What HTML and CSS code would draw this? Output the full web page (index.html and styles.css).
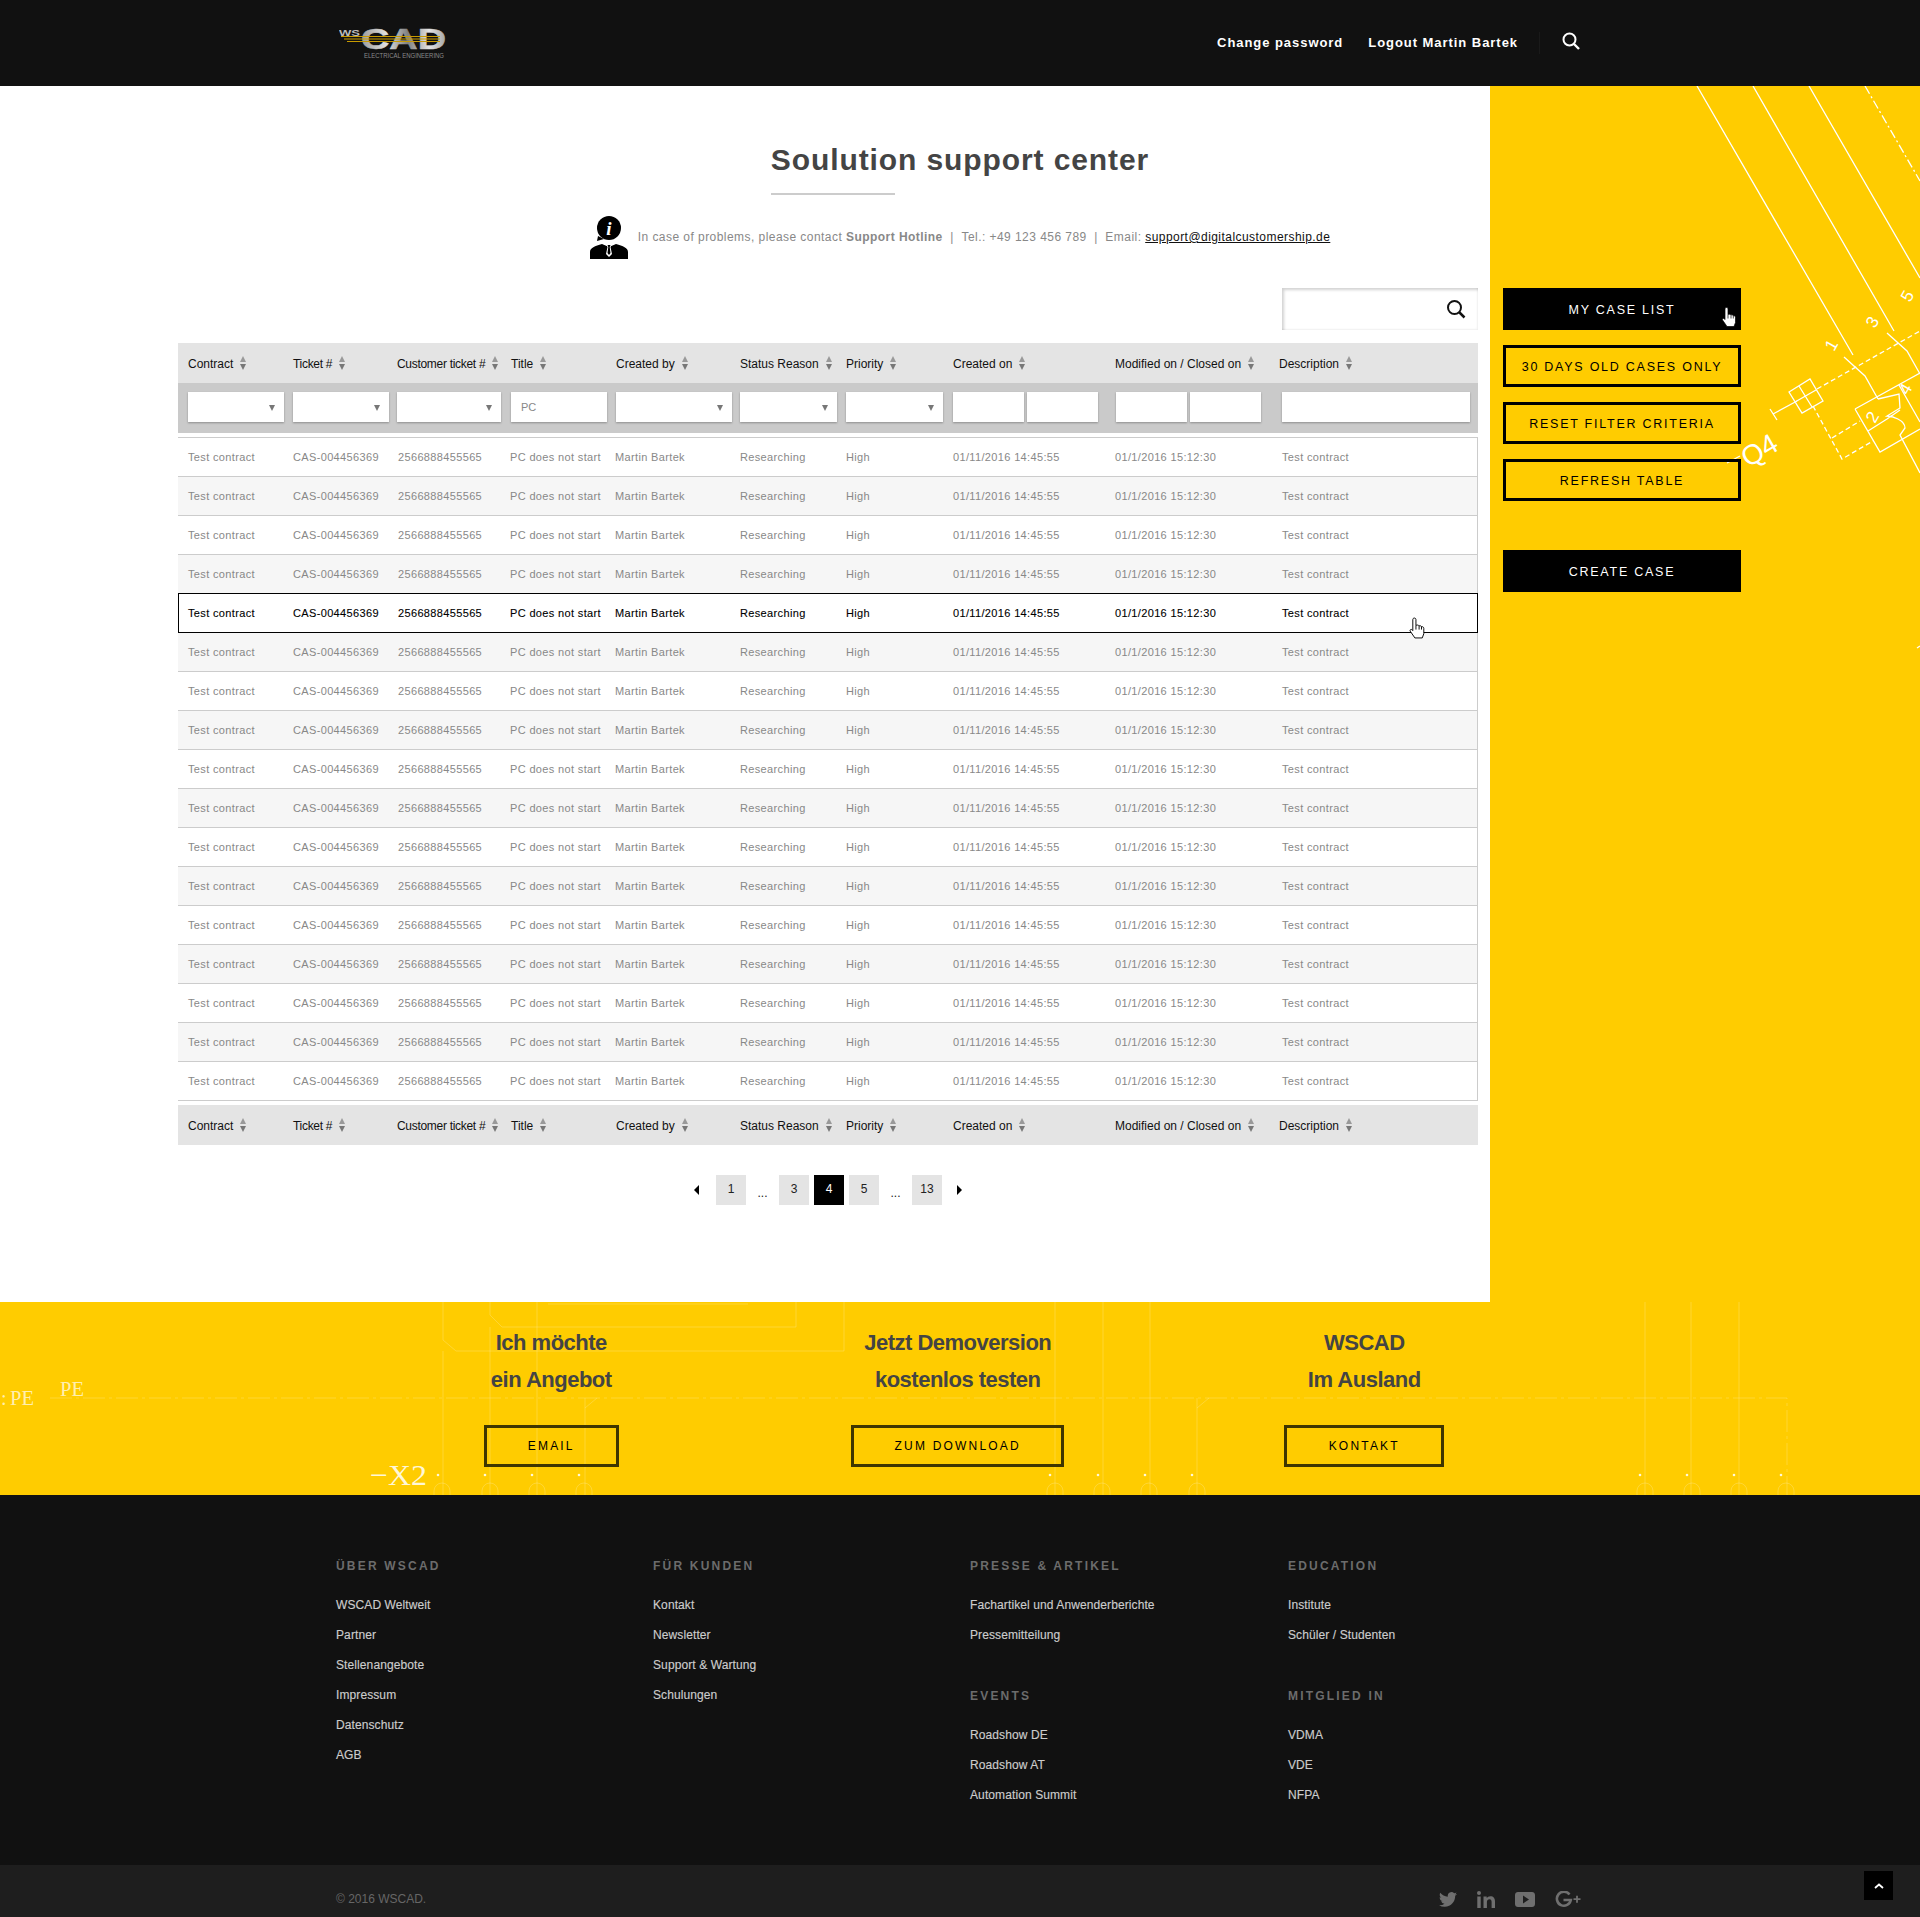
FILE: index.html
```html
<!DOCTYPE html>
<html lang="en">
<head>
    <meta charset="UTF-8">
    <title>Soulution support center</title>
    <link rel="stylesheet" href="styles.css">
</head>
<body>
    <header class="top">
        <a class="logo" href="#">
            <svg width="112" height="44" viewBox="0 -8 112 44">
                <defs>
                    <linearGradient id="metal" x1="0" y1="0" x2="1" y2="0">
                        <stop offset="0" stop-color="#9a9a9a"/>
                        <stop offset=".3" stop-color="#e2e2e2"/>
                        <stop offset=".55" stop-color="#808080"/>
                        <stop offset=".8" stop-color="#e4e4e4"/>
                        <stop offset="1" stop-color="#a5a5a5"/>
                    </linearGradient>
                </defs>
                <text x="0" y="7.500" class="logo-ws" textLength="21" lengthAdjust="spacingAndGlyphs">WS</text>
                <text x="22" y="21" class="logo-cad" textLength="85" lengthAdjust="spacingAndGlyphs">CAD</text>
                <path d="M2 8.500H101M5 11H101M8 13.500H101" stroke="#c79a00" stroke-width="1.200"/>
                <text x="25" y="30" class="logo-sub" textLength="80" lengthAdjust="spacingAndGlyphs">ELECTRICAL ENGINEERING</text>
            </svg>
        </a>
        <nav class="top-nav">
            <a href="#">Change password</a>
            <a href="#">Logout Martin Bartek</a>
            <span class="top-sep"></span>
            <svg class="top-search" width="18" height="18" viewBox="0 0 18 18"><circle cx="7.500" cy="7.500" r="6" fill="none" stroke="#fff" stroke-width="2"/><path d="M12 12l5 5" stroke="#fff" stroke-width="2.400"/></svg>
        </nav>
    </header>

    <div class="page">
        <main class="content">
            <div class="intro">
                <h1 class="title">Soulution support center</h1>
                <p class="contact">
                    <svg class="contact-icon" width="38" height="43" viewBox="0 0 38 43">
                        <ellipse cx="19" cy="12" rx="12" ry="12"/>
                        <path d="M8 20l-1 5 7-2z"/>
                        <path d="M0 43V36c0-4 5-6 12-8l7 3 7-3c7 2 12 4 12 8v7z"/>
                        <path d="M16 28h6l-1.500 3 1.500 7-3 3-3-3 1.500-7z" fill="#fff"/>
                        <path d="M17.500 29h3l-.8 2 .8 6-1.500 2-1.500-2 .8-6z"/>
                        <text x="19" y="19" class="contact-i">i</text>
                    </svg>
                    <span>In case of problems, please contact <b>Support Hotline</b>&nbsp; | &nbsp;Tel.: +49 123 456 789&nbsp; | &nbsp;Email: <a href="#">support@digitalcustomership.de</a></span>
                </p>
            </div>

            <div class="search-row">
                <div class="search-box">
                    <svg width="20" height="20" viewBox="0 0 20 20"><circle cx="8.500" cy="8.500" r="6.500" fill="none" stroke="#111" stroke-width="2"/><path d="M13 13l5.500 5.500" stroke="#111" stroke-width="2.500"/></svg>
                </div>
            </div>

            <div class="grid-row head-row">
                <div>Contract<i class="sort"></i></div>
                <div class="tight">Ticket #<i class="sort"></i></div>
                <div class="tight">Customer ticket #<i class="sort"></i></div>
                <div>Title<i class="sort"></i></div>
                <div>Created by<i class="sort"></i></div>
                <div>Status Reason<i class="sort"></i></div>
                <div>Priority<i class="sort"></i></div>
                <div>Created on<i class="sort"></i></div>
                <div>Modified on / Closed on<i class="sort"></i></div>
                <div>Description<i class="sort"></i></div>
            </div>
            <div class="grid-row filter-row">
                <div><span class="fld sel w96"></span></div>
                <div><span class="fld sel w96"></span></div>
                <div><span class="fld sel w104"></span></div>
                <div><span class="fld w96">PC</span></div>
                <div><span class="fld sel w116"></span></div>
                <div><span class="fld sel w97"></span></div>
                <div><span class="fld sel w97"></span></div>
                <div class="pair"><span class="fld w71"></span><span class="fld w71"></span></div>
                <div class="pair pair-shift"><span class="fld w71"></span><span class="fld w71"></span></div>
                <div class="desc-cell"><span class="fld w188"></span></div>
            </div>

            <div class="rows">
                <div class="grid-row case"><div>Test contract</div><div>CAS-004456369</div><div>2566888455565</div><div>PC does not start</div><div>Martin Bartek</div><div>Researching</div><div>High</div><div>01/11/2016 14:45:55</div><div>01/1/2016 15:12:30</div><div class="desc-cell">Test contract</div></div>
                <div class="grid-row case"><div>Test contract</div><div>CAS-004456369</div><div>2566888455565</div><div>PC does not start</div><div>Martin Bartek</div><div>Researching</div><div>High</div><div>01/11/2016 14:45:55</div><div>01/1/2016 15:12:30</div><div class="desc-cell">Test contract</div></div>
                <div class="grid-row case"><div>Test contract</div><div>CAS-004456369</div><div>2566888455565</div><div>PC does not start</div><div>Martin Bartek</div><div>Researching</div><div>High</div><div>01/11/2016 14:45:55</div><div>01/1/2016 15:12:30</div><div class="desc-cell">Test contract</div></div>
                <div class="grid-row case"><div>Test contract</div><div>CAS-004456369</div><div>2566888455565</div><div>PC does not start</div><div>Martin Bartek</div><div>Researching</div><div>High</div><div>01/11/2016 14:45:55</div><div>01/1/2016 15:12:30</div><div class="desc-cell">Test contract</div></div>
                <div class="grid-row case selected"><div>Test contract</div><div>CAS-004456369</div><div>2566888455565</div><div>PC does not start</div><div>Martin Bartek</div><div>Researching</div><div>High</div><div>01/11/2016 14:45:55</div><div>01/1/2016 15:12:30</div><div class="desc-cell">Test contract</div>
                    <svg class="hand hand-row" width="18" height="22" viewBox="0 0 16 21"><path d="M5.500 1C6.500 1 7 1.700 7 2.500V8C8 7.500 9.500 7.500 10 8.500 11 8 12 8.500 12.300 9.300 13 9 14.500 9.500 14.500 10.800V16L13 20H6L1.500 13.500C.8 12.300 2.500 11 3.800 12.700L4 13V2.500C4 1.700 4.500 1 5.500 1ZM7 8V12M10 8.500V12M12.300 9.300V12" fill="#fff" stroke="#000" stroke-width=".9"/></svg>
                </div>
                <div class="grid-row case"><div>Test contract</div><div>CAS-004456369</div><div>2566888455565</div><div>PC does not start</div><div>Martin Bartek</div><div>Researching</div><div>High</div><div>01/11/2016 14:45:55</div><div>01/1/2016 15:12:30</div><div class="desc-cell">Test contract</div></div>
                <div class="grid-row case"><div>Test contract</div><div>CAS-004456369</div><div>2566888455565</div><div>PC does not start</div><div>Martin Bartek</div><div>Researching</div><div>High</div><div>01/11/2016 14:45:55</div><div>01/1/2016 15:12:30</div><div class="desc-cell">Test contract</div></div>
                <div class="grid-row case"><div>Test contract</div><div>CAS-004456369</div><div>2566888455565</div><div>PC does not start</div><div>Martin Bartek</div><div>Researching</div><div>High</div><div>01/11/2016 14:45:55</div><div>01/1/2016 15:12:30</div><div class="desc-cell">Test contract</div></div>
                <div class="grid-row case"><div>Test contract</div><div>CAS-004456369</div><div>2566888455565</div><div>PC does not start</div><div>Martin Bartek</div><div>Researching</div><div>High</div><div>01/11/2016 14:45:55</div><div>01/1/2016 15:12:30</div><div class="desc-cell">Test contract</div></div>
                <div class="grid-row case"><div>Test contract</div><div>CAS-004456369</div><div>2566888455565</div><div>PC does not start</div><div>Martin Bartek</div><div>Researching</div><div>High</div><div>01/11/2016 14:45:55</div><div>01/1/2016 15:12:30</div><div class="desc-cell">Test contract</div></div>
                <div class="grid-row case"><div>Test contract</div><div>CAS-004456369</div><div>2566888455565</div><div>PC does not start</div><div>Martin Bartek</div><div>Researching</div><div>High</div><div>01/11/2016 14:45:55</div><div>01/1/2016 15:12:30</div><div class="desc-cell">Test contract</div></div>
                <div class="grid-row case"><div>Test contract</div><div>CAS-004456369</div><div>2566888455565</div><div>PC does not start</div><div>Martin Bartek</div><div>Researching</div><div>High</div><div>01/11/2016 14:45:55</div><div>01/1/2016 15:12:30</div><div class="desc-cell">Test contract</div></div>
                <div class="grid-row case"><div>Test contract</div><div>CAS-004456369</div><div>2566888455565</div><div>PC does not start</div><div>Martin Bartek</div><div>Researching</div><div>High</div><div>01/11/2016 14:45:55</div><div>01/1/2016 15:12:30</div><div class="desc-cell">Test contract</div></div>
                <div class="grid-row case"><div>Test contract</div><div>CAS-004456369</div><div>2566888455565</div><div>PC does not start</div><div>Martin Bartek</div><div>Researching</div><div>High</div><div>01/11/2016 14:45:55</div><div>01/1/2016 15:12:30</div><div class="desc-cell">Test contract</div></div>
                <div class="grid-row case"><div>Test contract</div><div>CAS-004456369</div><div>2566888455565</div><div>PC does not start</div><div>Martin Bartek</div><div>Researching</div><div>High</div><div>01/11/2016 14:45:55</div><div>01/1/2016 15:12:30</div><div class="desc-cell">Test contract</div></div>
                <div class="grid-row case"><div>Test contract</div><div>CAS-004456369</div><div>2566888455565</div><div>PC does not start</div><div>Martin Bartek</div><div>Researching</div><div>High</div><div>01/11/2016 14:45:55</div><div>01/1/2016 15:12:30</div><div class="desc-cell">Test contract</div></div>
                <div class="grid-row case"><div>Test contract</div><div>CAS-004456369</div><div>2566888455565</div><div>PC does not start</div><div>Martin Bartek</div><div>Researching</div><div>High</div><div>01/11/2016 14:45:55</div><div>01/1/2016 15:12:30</div><div class="desc-cell">Test contract</div></div>
            </div>

            <div class="grid-row head-row foot-row">
                <div>Contract<i class="sort"></i></div>
                <div class="tight">Ticket #<i class="sort"></i></div>
                <div class="tight">Customer ticket #<i class="sort"></i></div>
                <div>Title<i class="sort"></i></div>
                <div>Created by<i class="sort"></i></div>
                <div>Status Reason<i class="sort"></i></div>
                <div>Priority<i class="sort"></i></div>
                <div>Created on<i class="sort"></i></div>
                <div>Modified on / Closed on<i class="sort"></i></div>
                <div>Description<i class="sort"></i></div>
            </div>

            <div class="pager">
                <i class="arrow arrow-l"></i>
                <a href="#">1</a>
                <span>...</span>
                <a href="#">3</a>
                <a href="#" class="on">4</a>
                <a href="#">5</a>
                <span>...</span>
                <a href="#">13</a>
                <i class="arrow arrow-r"></i>
            </div>
        </main>

        <aside class="side">
            <svg class="side-art" width="430" height="1216" viewBox="1490 86 430 1216">
                <g fill="none" stroke="#fff" stroke-width="1.300">
                    <path d="M1697 86L1853 355M1753 86L1894 331M1809 86L1920 278"/>
                    <path d="M1865 86L1920 181" stroke-dasharray="9 3 2 3"/>
                    <path d="M1817 389L1920 331M1813 406L1842 459L1873 441M1832 438L1860 421" stroke-dasharray="5 3"/>
                    <path d="M1789 392L1810 379L1823 401L1802 413ZM1799 386L1812 407M1795 402L1816 390"/>
                    <path d="M1773 414L1797 401M1770 409L1777 420"/>
                    <path d="M1844 357L1865 376L1878 399M1887 333L1907 351L1920 374"/>
                    <path d="M1855 409L1920 373M1855 409L1880 452L1920 429M1868 431L1887 419L1900 410M1878 399L1899 394L1900 408L1887 416C1892 416 1905 420 1905 428L1900 435L1920 473M1899 385L1920 422"/>
                    <path d="M1727 463L1740 456"/>
                    <path d="M1917 648L1920 646"/>
                </g>
                <g class="art-text">
                    <text transform="translate(1834 352) rotate(-60)">1</text>
                    <text transform="translate(1875 329) rotate(-60)">3</text>
                    <text transform="translate(1910 303) rotate(-60)">5</text>
                    <text transform="translate(1875 424) rotate(-60)">2</text>
                    <text transform="translate(1908 396) rotate(-60)">4</text>
                    <text class="art-q" transform="translate(1748 468) rotate(-30)">Q4</text>
                </g>
            </svg>
            <a class="btn btn-dark hot" href="#">MY CASE LIST
                <svg class="hand hand-btn" width="16" height="22" viewBox="0 0 16 21"><path d="M5.500 1C6.500 1 7 1.700 7 2.500V8C8 7.500 9.500 7.500 10 8.500 11 8 12 8.500 12.300 9.300 13 9 14.500 9.500 14.500 10.800V16L13 20H6L1.500 13.500C.8 12.300 2.500 11 3.800 12.700L4 13V2.500C4 1.700 4.500 1 5.500 1ZM7 8V12M10 8.500V12M12.300 9.300V12" fill="#fff" stroke="#000" stroke-width=".7"/></svg>
            </a>
            <a class="btn" href="#">30 DAYS OLD CASES ONLY</a>
            <a class="btn" href="#">RESET FILTER CRITERIA</a>
            <a class="btn" href="#">REFRESH TABLE</a>
            <a class="btn btn-dark btn-create" href="#">CREATE CASE</a>
        </aside>
    </div>

    <section class="band">
        <svg class="band-art" width="1920" height="193" viewBox="0 1302 1920 193">
            <g fill="none" stroke="#fff" stroke-opacity=".2">
                <path d="M50 1398H1787V1495" stroke-dasharray="22 4 3 4"/>
                <path d="M443 1302V1340L456 1351H844V1302M490 1302V1315L502 1327H796V1302M548 1304H748"/>
                <path d="M443 1351V1495M490 1327V1495M537 1302V1495M585 1398V1495M585 1408L597 1398"/>
                <path d="M1055 1302V1495M1103 1302V1495M1150 1302V1495M1197 1398V1495M1197 1408L1209 1398"/>
                <path d="M1645 1302V1495M1691 1302V1495M1739 1302V1495"/>
                <path d="M434 1495V1491A8 8 0 0 1 450 1491V1495M482 1495V1491A8 8 0 0 1 498 1491V1495M529 1495V1491A8 8 0 0 1 545 1491V1495M576 1495V1491A8 8 0 0 1 592 1491V1495"/>
                <path d="M1047 1495V1491A8 8 0 0 1 1063 1491V1495M1094 1495V1491A8 8 0 0 1 1110 1491V1495M1141 1495V1491A8 8 0 0 1 1157 1491V1495M1189 1495V1491A8 8 0 0 1 1205 1491V1495"/>
                <path d="M1637 1495V1491A8 8 0 0 1 1653 1491V1495M1684 1495V1491A8 8 0 0 1 1700 1491V1495M1731 1495V1491A8 8 0 0 1 1747 1491V1495M1778 1495V1491A8 8 0 0 1 1794 1491V1495"/>
            </g>
            <g fill="#fff" fill-opacity=".85">
                <circle cx="438" cy="1475" r="1.300"/><circle cx="485" cy="1475" r="1.300"/><circle cx="532" cy="1475" r="1.300"/><circle cx="579" cy="1475" r="1.300"/>
                <circle cx="1050" cy="1475" r="1.300"/><circle cx="1098" cy="1475" r="1.300"/><circle cx="1145" cy="1475" r="1.300"/><circle cx="1192" cy="1475" r="1.300"/>
                <circle cx="1640" cy="1475" r="1.300"/><circle cx="1687" cy="1475" r="1.300"/><circle cx="1734" cy="1475" r="1.300"/><circle cx="1781" cy="1475" r="1.300"/>
            </g>
            <g class="band-text">
                <text x="1" y="1405">:</text>
                <text x="10" y="1405" textLength="24" lengthAdjust="spacingAndGlyphs">PE</text>
                <text x="60" y="1396" textLength="24" lengthAdjust="spacingAndGlyphs">PE</text>
                <text class="band-x2" x="370" y="1485" textLength="57" lengthAdjust="spacingAndGlyphs">−X2</text>
            </g>
        </svg>
        <div class="band-grid">
            <div class="band-col">
                <h3>Ich möchte<br>ein Angebot</h3>
                <a class="btn band-btn w135" href="#">EMAIL</a>
            </div>
            <div class="band-col">
                <h3>Jetzt Demoversion<br>kostenlos testen</h3>
                <a class="btn band-btn w213" href="#">ZUM DOWNLOAD</a>
            </div>
            <div class="band-col">
                <h3>WSCAD<br>Im Ausland</h3>
                <a class="btn band-btn w160" href="#">KONTAKT</a>
            </div>
        </div>
    </section>

    <footer class="foot">
        <div class="foot-cols">
            <div>
                <h4>ÜBER WSCAD</h4>
                <a href="#">WSCAD Weltweit</a>
                <a href="#">Partner</a>
                <a href="#">Stellenangebote</a>
                <a href="#">Impressum</a>
                <a href="#">Datenschutz</a>
                <a href="#">AGB</a>
            </div>
            <div>
                <h4>FÜR KUNDEN</h4>
                <a href="#">Kontakt</a>
                <a href="#">Newsletter</a>
                <a href="#">Support &amp; Wartung</a>
                <a href="#">Schulungen</a>
            </div>
            <div>
                <h4>PRESSE &amp; ARTIKEL</h4>
                <a href="#">Fachartikel und Anwenderberichte</a>
                <a href="#">Pressemitteilung</a>
                <h4 class="second">EVENTS</h4>
                <a href="#">Roadshow DE</a>
                <a href="#">Roadshow AT</a>
                <a href="#">Automation Summit</a>
            </div>
            <div>
                <h4>EDUCATION</h4>
                <a href="#">Institute</a>
                <a href="#">Schüler / Studenten</a>
                <h4 class="second">MITGLIED IN</h4>
                <a href="#">VDMA</a>
                <a href="#">VDE</a>
                <a href="#">NFPA</a>
            </div>
        </div>
        <div class="foot-bottom">
            <span class="copy">© 2016 WSCAD.</span>
            <div class="social">
                <svg width="18" height="15" viewBox="0 0 24 20"><path d="M23.950 2.570a10 10 0 0 1-2.820.770 4.960 4.960 0 0 0 2.160-2.720c-.95.550-2 .96-3.130 1.180a4.920 4.920 0 0 0-8.380 4.480C7.690 6.100 4.070 4.130 1.640 1.160a4.820 4.820 0 0 0-.67 2.480c0 1.710.87 3.210 2.190 4.090a4.900 4.900 0 0 1-2.230-.61v.06a4.920 4.920 0 0 0 3.950 4.820 5 5 0 0 1-2.210.09 4.940 4.940 0 0 0 4.600 3.420 9.870 9.870 0 0 1-6.100 2.100c-.39 0-.78-.02-1.170-.06a14 14 0 0 0 7.560 2.210c9.050 0 14-7.500 14-13.990 0-.21 0-.42-.02-.63a9.940 9.940 0 0 0 2.460-2.550z"/></svg>
                <svg width="18" height="17" viewBox="0 0 18 17"><circle cx="2" cy="2" r="2"/><rect x=".3" y="5.500" width="3.400" height="11.500"/><path d="M6.500 5.500h3.200v1.600c.7-1.100 2-1.900 3.600-1.900 3.300 0 4.700 2 4.700 5.200V17h-3.400v-5.900c0-1.700-.6-2.900-2.100-2.900-1.600 0-2.600 1.100-2.600 2.900V17H6.500z"/></svg>
                <svg width="20" height="15" viewBox="0 0 20 15"><path fill-rule="evenodd" d="M3 0H17C18.700 0 20 1.300 20 3V12C20 13.700 18.700 15 17 15H3C1.300 15 0 13.700 0 12V3C0 1.300 1.300 0 3 0ZM8 3.500V11.500L14 7.500Z"/></svg>
                <svg width="26" height="17" viewBox="0 0 26 17"><path d="M14.500 3.500A7 7 0 1 0 15.800 9H8.500" fill="none" stroke="#6f6f6f" stroke-width="2.600"/><path d="M18.500 7.300h2.600V4.700h1.800v2.600h2.600v1.800h-2.600v2.600h-1.800V9.100h-2.600z"/></svg>
            </div>
            <a class="to-top" href="#"><svg width="10" height="6" viewBox="0 0 10 6"><path d="M1 5l4-3.500L9 5" fill="none" stroke="#fff" stroke-width="1.800"/></svg></a>
        </div>
    </footer>
</body>
</html>
```

FILE: styles.css
```css
* {
    margin: 0;
    padding: 0;
    box-sizing: border-box;
}
body {
    font-family: "Liberation Sans", Arial, sans-serif;
    background: #fc0;
    color: #444;
    width: 1920px;
}
a {
    color: inherit;
    text-decoration: none;
}

/* top bar */
.top {
    height: 86px;
    background: #111;
    display: flex;
    align-items: center;
    padding: 0 340px 0 339px;
}
.logo {
    display: block;
    width: 107px;
    height: 30px;
}
.logo svg {
    display: block;
    margin-top: -8px;
}
.logo-ws {
    font-size: 9.500px;
    font-weight: bold;
    fill: #bbb;
}
.logo-cad {
    font-size: 29px;
    font-weight: bold;
    fill: url(#metal);
    stroke: url(#metal);
    stroke-width: .6px;
}
.logo-sub {
    font-size: 6.500px;
    fill: #8a8a8a;
}
.top-nav {
    margin-left: auto;
    display: flex;
    align-items: center;
    color: #fff;
    font-size: 13px;
    font-weight: bold;
    letter-spacing: .95px;
}
.top-nav a {
    margin: -2px 0 0 25px;
}
.top-sep {
    width: 1px;
    height: 22px;
    margin-left: 21px;
    background: #1a1a1a;
}
.top-search {
    margin: -4px 0 0 22px;
}

/* page body */
.page {
    display: grid;
    grid-template-columns: 1490px 430px;
    height: 1216px;
}
.content {
    background: #fff;
    padding: 56px 12px 0 178px;
}
.intro {
    margin: 0 -12px 0 252px;
    text-align: center;
    height: 146px;
}
.title {
    display: inline-block;
    font-size: 30px;
    line-height: 36px;
    letter-spacing: .9px;
    color: #444;
    text-align: left;
}
.title::after {
    content: "";
    display: block;
    width: 124px;
    height: 2px;
    margin-top: 15px;
    background: #ccc;
}
.contact {
    display: flex;
    justify-content: center;
    align-items: flex-start;
    margin-top: 21px;
    font-size: 12px;
    letter-spacing: .45px;
    color: #888;
}
.contact span {
    margin: 14px 0 0 10px;
}
.contact a {
    color: #111;
    text-decoration: underline;
}
.contact-i {
    font-family: "Liberation Serif", serif;
    font-size: 19px;
    font-style: italic;
    font-weight: bold;
    fill: #fff;
    text-anchor: middle;
}
.search-row {
    display: flex;
    justify-content: flex-end;
    height: 55px;
}
.search-box {
    width: 196px;
    height: 42px;
    padding: 11px 12px 0 0;
    text-align: right;
    background: #fff;
    box-shadow: inset 2px 2px 3px rgba(0,0,0,.18), inset -1px -1px 2px rgba(0,0,0,.06);
}

/* case table */
.grid-row {
    display: grid;
    grid-template-columns: 105px 104px 114px 105px 124px 106px 107px 162px 164px 199px;
    padding-left: 10px;
    align-items: center;
}
.head-row {
    height: 40px;
    background: #e4e4e4;
    color: #111;
    font-size: 12px;
}
.tight {
    letter-spacing: -.3px;
}
.sort {
    display: inline-block;
    position: relative;
    width: 7px;
    height: 14px;
    margin-left: 7px;
    vertical-align: -2px;
}
.sort::before,
.sort::after {
    content: "";
    position: absolute;
    left: 0;
    border-left: 3.500px solid transparent;
    border-right: 3.500px solid transparent;
}
.sort::before {
    top: 0;
    border-bottom: 6px solid #999;
}
.sort::after {
    bottom: 0;
    border-top: 6px solid #777;
}
.filter-row {
    height: 50px;
    padding-bottom: 2px;
    background: #cacaca;
    font-size: 11px;
    color: #888;
}
.fld {
    display: block;
    position: relative;
    height: 30px;
    line-height: 30px;
    padding-left: 10px;
    background: #fff;
    box-shadow: 0 1px 2px rgba(0,0,0,.3);
}
.sel::after {
    content: "";
    position: absolute;
    right: 9px;
    top: 13px;
    border-left: 3px solid transparent;
    border-right: 3px solid transparent;
    border-top: 6px solid #777;
}
.w71 { width: 71px; }
.w96 { width: 96px; }
.w97 { width: 97px; }
.w104 { width: 104px; }
.w116 { width: 116px; }
.w188 { width: 188px; }
.pair {
    display: flex;
    gap: 3px;
}
.pair-shift {
    margin-left: 1px;
}
.desc-cell {
    padding-left: 3px;
}
.rows {
    margin-top: 4px;
    border: 1px solid #ccc;
    border-top: 0;
}
.case {
    grid-template-columns: 105px 105px 112px 105px 125px 106px 107px 162px 164px 199px;
    height: 39px;
    margin-left: -1px;
    padding-left: 10px;
    border-top: 1px solid #ccc;
    font-size: 11px;
    letter-spacing: .35px;
    color: #888;
    background: #fff;
}
.case:nth-child(even) {
    background: #f6f6f6;
}
.case.selected {
    position: relative;
    height: 40px;
    margin: 0 -1px -1px -1px;
    padding-left: 9px;
    border: 1px solid #000;
    color: #000;
    -webkit-text-stroke: .1px #000;
    background: #fff;
}
.hand {
    position: absolute;
}
.hand-row {
    right: 51px;
    top: 23px;
}
.foot-row {
    margin-top: 4px;
}
.pager {
    display: flex;
    justify-content: center;
    align-items: center;
    gap: 5px;
    margin-top: 30px;
    color: #222;
    font-size: 12px;
}
.pager a {
    width: 30px;
    height: 30px;
    line-height: 28px;
    text-align: center;
    background: #e4e4e4;
}
.pager a.on {
    background: #000;
    color: #fff;
}
.pager span {
    width: 23px;
    text-align: center;
    padding-top: 6px;
}
.arrow {
    width: 0;
    height: 0;
    border-top: 5px solid transparent;
    border-bottom: 5px solid transparent;
}
.arrow-l {
    border-right: 5px solid #000;
    margin-right: 12px;
}
.arrow-r {
    border-left: 5px solid #000;
    margin-left: 10px;
}

/* yellow column */
.side {
    position: relative;
    padding: 202px 0 0 13px;
    overflow: hidden;
}
.side-art {
    position: absolute;
    left: 0;
    top: 0;
}
.art-text {
    fill: #fff;
    font-size: 17px;
}
.art-q {
    font-size: 28px;
}
.btn {
    display: block;
    position: relative;
    width: 238px;
    height: 42px;
    line-height: 38px;
    margin-bottom: 15px;
    border: 3px solid #000;
    text-align: center;
    color: #000;
    font-size: 12.500px;
    letter-spacing: 1.750px;
}
.btn-dark {
    background: #000;
    color: #fff;
}
.btn-create {
    margin-top: 49px;
}
.hand-btn {
    left: 215px;
    top: 15px;
}

/* yellow band */
.band {
    position: relative;
    height: 193px;
    padding-top: 23px;
    overflow: hidden;
}
.band-art {
    position: absolute;
    left: 0;
    top: 0;
}
.band-text {
    fill: #fff;
    fill-opacity: .7;
    font-family: "Liberation Serif", serif;
    font-size: 20px;
}
.band-x2 {
    font-size: 30px;
    fill-opacity: .85;
}
.band-grid {
    position: relative;
    display: grid;
    grid-template-columns: repeat(3, 406.500px);
    margin-left: 348px;
}
.band-col {
    text-align: center;
}
.band-col h3 {
    font-size: 22px;
    line-height: 36.500px;
    letter-spacing: -.5px;
    color: #444;
}
.band-btn {
    display: inline-block;
    margin: 27px 0 0;
    line-height: 36px;
    border-color: #3f3500;
    font-size: 12px;
    letter-spacing: 2.200px;
}
.w135 { width: 135px; }
.w213 { width: 213px; }
.w160 { width: 160px; }

/* footer */
.foot {
    background: #111;
}
.foot-cols {
    display: grid;
    grid-template-columns: 317px 317px 318px 317px;
    height: 370px;
    padding: 61px 0 0 336px;
}
.foot-cols h4 {
    font-size: 12px;
    line-height: 20px;
    letter-spacing: 2.200px;
    margin-bottom: 14px;
    color: #6c6c6c;
}
.foot-cols h4.second {
    margin-top: 36px;
}
.foot-cols a {
    display: block;
    font-size: 12px;
    line-height: 30px;
    letter-spacing: .1px;
    color: #ccc;
    -webkit-text-stroke: .15px #ccc;
}
.foot-bottom {
    position: relative;
    display: flex;
    justify-content: space-between;
    align-items: flex-start;
    height: 52px;
    padding: 27px 339px 0 336px;
    background: #1e1e1e;
}
.copy {
    font-size: 12px;
    line-height: 15px;
    color: #666;
}
.social {
    display: flex;
    align-items: center;
    gap: 20px;
    margin-top: -1px;
    fill: #6f6f6f;
}
.to-top {
    position: absolute;
    left: 1864px;
    top: 6px;
    width: 29px;
    height: 29px;
    background: #000;
    display: flex;
    align-items: center;
    justify-content: center;
}
```
